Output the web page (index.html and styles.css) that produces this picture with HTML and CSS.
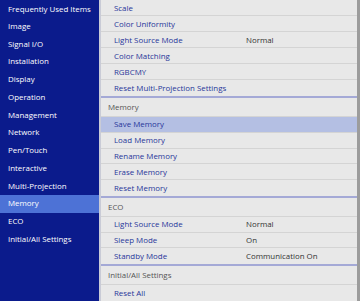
FILE: index.html
```html
<!DOCTYPE html>
<html>
<head>
<meta charset="utf-8">
<link rel="stylesheet" href="styles.css">
</head>
<body>
<div class="screen">
  <nav class="side">
    <div class="side-item">Frequently Used Items</div>
    <div class="side-item">Image</div>
    <div class="side-item">Signal I/O</div>
    <div class="side-item">Installation</div>
    <div class="side-item">Display</div>
    <div class="side-item">Operation</div>
    <div class="side-item">Management</div>
    <div class="side-item">Network</div>
    <div class="side-item">Pen/Touch</div>
    <div class="side-item">Interactive</div>
    <div class="side-item">Multi-Projection</div>
    <div class="side-item active">Memory</div>
    <div class="side-item">ECO</div>
    <div class="side-item">Initial/All Settings</div>
  </nav>
  <main class="panel">
    <section class="group first">
      <div class="row"><span class="label">Scale</span></div>
      <div class="row"><span class="label">Color Uniformity</span></div>
      <div class="row"><span class="label">Light Source Mode</span><span class="value">Normal</span></div>
      <div class="row"><span class="label">Color Matching</span></div>
      <div class="row"><span class="label">RGBCMY</span></div>
      <div class="row"><span class="label">Reset Multi-Projection Settings</span></div>
    </section>
    <section class="group">
      <div class="head">Memory</div>
      <div class="row selected"><span class="label">Save Memory</span></div>
      <div class="row"><span class="label">Load Memory</span></div>
      <div class="row"><span class="label">Rename Memory</span></div>
      <div class="row"><span class="label">Erase Memory</span></div>
      <div class="row"><span class="label">Reset Memory</span></div>
    </section>
    <section class="group">
      <div class="head">ECO</div>
      <div class="row"><span class="label">Light Source Mode</span><span class="value">Normal</span></div>
      <div class="row"><span class="label">Sleep Mode</span><span class="value">On</span></div>
      <div class="row"><span class="label">Standby Mode</span><span class="value">Communication On</span></div>
    </section>
    <section class="group last">
      <div class="head">Initial/All Settings</div>
      <div class="row"><span class="label">Reset All</span></div>
    </section>
  </main>
</div>
</body>
</html>
```
FILE: styles.css
```css
html, body {
  margin: 0;
  padding: 0;
  background: #e8e8e8;
}
body {
  font-family: "Open Sans", "Noto Sans", sans-serif;
  font-size: 7.9px;
}
.screen {
  width: 360px;
  height: 301px;
  display: flex;
  overflow: hidden;
}
.side {
  width: 99px;
  flex: none;
  background: #0b1b8c;
  border-right: 2px solid #c9cbd6;
}
.side-item {
  height: 17.75px;
  line-height: 17.75px;
  padding-left: 8px;
  color: #ffffff;
  white-space: nowrap;
  font-weight: 500;
}
.side-item:first-child {
  line-height: 18.5px;
}
.side-item.active {
  background: #4d72d6;
}
.panel {
  flex: 1;
  background: #e8e8e8;
  border-right: 3px solid #9c9c9c;
  overflow: hidden;
}
.group {
  border-bottom: 2px solid #a4a9d6;
}
.group.last {
  border-bottom: none;
}
.row {
  box-sizing: border-box;
  height: 15.75px;
  display: grid;
  grid-template-columns: 132px 1fr;
  align-items: center;
  padding-left: 13px;
  border-bottom: 1px solid #d4d4d4;
  white-space: nowrap;
}
.group.first .row {
  height: 16px;
}
.group .row:last-child {
  border-bottom: none;
}
.group.last .row {
  height: 16px;
}
.label {
  color: #27369a;
  font-weight: 500;
}
.value {
  color: #333333;
}
.row.selected {
  background: #b4bfe3;
}
.head {
  box-sizing: border-box;
  height: 19px;
  line-height: 19px;
  padding-left: 7px;
  color: #555555;
  border-bottom: 1px solid #d4d4d4;
}
```
